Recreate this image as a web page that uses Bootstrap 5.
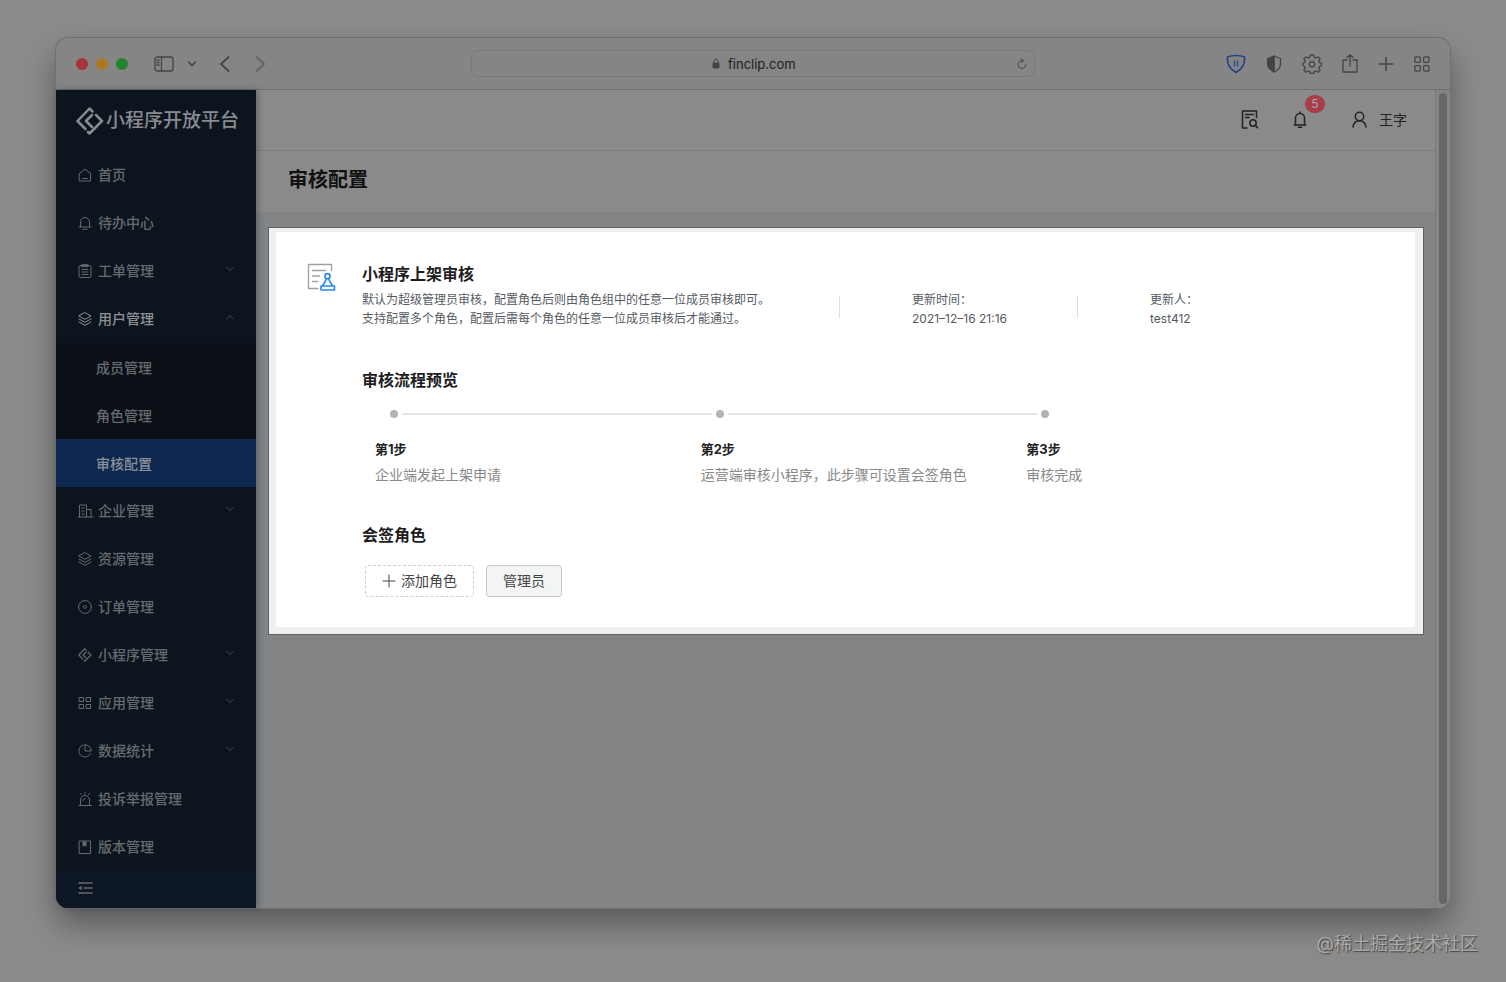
<!DOCTYPE html>
<html lang="zh-CN">
<head>
<meta charset="utf-8">
<meta name="viewport" content="width=device-width, initial-scale=1">
<title>审核配置 - 小程序开放平台</title>
<link href="https://cdn.jsdelivr.net/npm/bootstrap@5.3.0/dist/css/bootstrap.min.css" rel="stylesheet">
<style>
body{font-family:Inter,"Noto Sans CJK SC",sans-serif;font-size:14px;line-height:20px;background:#8b8b8b;color:#222}
svg{fill:none;stroke:currentColor;stroke-linecap:round;stroke-linejoin:round;flex:none;display:block}
button,a{color:inherit}
.plain{background:none;border:0;padding:0}
.desk{padding:38px 56px 0}
.browser{border-radius:12px;background:#828486;box-shadow:0 0 0 1px #707070,0 16px 32px rgba(0,0,0,.36)}
.toolbar{display:grid;grid-template-columns:1fr minmax(200px,564px) 1fr;height:52px;background:#858585;border-bottom:1px solid #6e6e6e;border-radius:12px 12px 0 0;color:#444}
.light{width:12px;height:12px;border-radius:50%}
.red{background:#a83437}
.amber{background:#a97a22}
.green{background:#23832f}
.panel-toggle{margin:0 14px 0 26px}
.address{display:grid;grid-template-columns:1fr auto 1fr;height:27px;border:1px solid #797979;border-radius:6px;padding:0 7px}
.address input{width:70px;font-size:13px;color:#1c1c1c;outline:0}
.side{width:200px;background:#0c151e;color:#666b70;border-radius:0 0 0 12px;box-shadow:2px 0 6px rgba(0,20,40,.3);z-index:1}
.brand{height:61px;padding:0 20px;gap:2px;font-size:19px;color:#888c91;font-weight:500}
.side .nav-item a{display:flex;align-items:center;height:48px;padding:0 22px;gap:6px;color:inherit;text-decoration:none;font-weight:500}
.side .open>a{color:#8e9296}
.side .sub{background:#0a1016}
.side .sub a{padding:1px 40px 0}
.side .sub .active a{background:#0e2850;color:#8a9099}
.side .chev{margin-left:auto;margin-bottom:5px;color:#454b51}
.fold{padding:0 22px 4px;background:#0d1724;border-radius:0 0 0 12px;min-height:37px}
.page{min-width:0}
.topbar{height:61px;background:#8a8a8a;border-bottom:1px solid #7c7c7c;padding-right:28px;color:#222}
.bell{margin:0 44px 0 34px}
.count{left:12px;top:-16px;width:20px;height:18px;border-radius:9px;background:#a83d49;color:#aaa;font-size:12px;line-height:18px}
.heading{height:61px;background:#8a8a8a;padding:0 32px 4px}
.heading h1{font-size:20px;line-height:28px;font-weight:700;color:#111}
.spot{margin:15px 11px 0 12px;padding:4px 8px 7px 7px;border:1px solid #5f6163;background:#edeff1}
.review{background:#fff;padding:30px 31px 30px}
.review-icon{margin:1px 25px 0 0}
.review h2{font-size:16px;line-height:24px;font-weight:700;color:#1d1d1d;margin:0}
.info{display:grid;grid-template-columns:minmax(0,477px) minmax(0,238px) 1fr;margin:4px 0 40px;font-size:12px;line-height:19px;color:#555a5f}
.info .cell{padding-left:73px;position:relative}
.info .cell::before{content:"";position:absolute;left:0;top:6px;height:22px;border-left:1px solid #dedede}
.flow{display:grid;grid-template-columns:repeat(3,1fr);padding:0 32px 0 13px;margin:16px 0 38px}
.track{height:12px;padding-left:15px;gap:4px;margin:0 -11px 19px 0}
.dot{width:8px;height:8px;border-radius:50%;background:#b3b3b3}
.rail{height:2px;background:#e4e4e4}
.flow h3{font-size:13px;line-height:20px;font-weight:700;color:#222;margin:0 0 6px}
.flow p{color:#888;line-height:20px;margin:0}
.roles{gap:12px;padding-left:3px;margin-top:18px}
.role{height:32px;border-radius:3px;font-size:14px;line-height:20px;padding:0 16px;color:#444;background:#f3f5f5;border:1px solid #c9cbcb}
.role.add{background:#fff;border:1px dashed #cfcfcf;gap:5px}
.scroll{width:15px;background:#858585;border-left:1px solid #7b7b7b;border-radius:0 0 12px 0;padding:3px 3px 4px}
.thumb{background:#666;border-radius:4px}
.credit{height:74px;padding:0 28px 2px;font-size:18px;color:#aaa;text-shadow:1px 1px 1px #444}
</style>
</head>
<body class="min-vh-100 d-flex flex-column">
<svg width="0" height="0" class="position-absolute">
<defs>
<symbol id="down" viewBox="0 0 8 6"><path d="M.5 1 4 4.500 7.500 1"/></symbol>
<symbol id="layers" viewBox="0 0 14 14"><path d="M7 .7 13 4 7 7.300 1 4zM1 7l6 3.300L13 7M1 10l6 3.300 6-3.300"/></symbol>
<symbol id="clip" viewBox="0 0 28 28"><path d="M16.500 4.500 13.500 1.500 1.500 14l8 8M20 8l6 6-12.500 12.500-1.500-1.500M16 8l-6 6 6 6"/></symbol>
<symbol id="four" viewBox="0 0 14 14"><path d="M1.500 1.500h4v4h-4zM8.500 1.500h4v4h-4zM1.500 8.500h4v4h-4zM8.500 8.500h4v4h-4z"/></symbol>
</defs>
</svg>
<div class="desk flex-grow-1 d-flex flex-column">
<div class="browser flex-grow-1 d-flex flex-column">
  <header class="toolbar align-items-center">
    <div class="d-flex align-items-center ps-3">
      <div class="d-flex gap-2 ms-1">
        <span class="light red"></span><span class="light amber"></span><span class="light green"></span>
      </div>
      <button class="plain panel-toggle" aria-label="边栏"><svg width="20" height="16" viewBox="0 0 20 16" stroke-width="1.300"><rect x="1" y="1" width="18" height="14" rx="2"/><path d="M7.500 1v14M3 4h2M3 6.500h2M3 9h2" /></svg></button>
      <button class="plain" aria-label="标签组"><svg width="8" height="6" stroke-width="1.500"><use href="#down"/></svg></button>
      <button class="plain ms-4" aria-label="后退"><svg width="10" height="16" viewBox="0 0 10 16" stroke-width="1.800"><path d="M8.500 1 1 8l7.500 7"/></svg></button>
      <button class="plain ms-4 opacity-50" aria-label="前进"><svg width="12" height="16" viewBox="0 0 12 16" stroke-width="1.800"><path d="M2.500 1l7.500 7-7.500 7"/></svg></button>
    </div>
    <div class="address align-items-center">
      <span></span>
      <label class="d-flex align-items-center gap-2 ps-1"><svg width="8" height="11" viewBox="0 0 8 11"><rect x="1" y="5" width="6" height="5" rx=".5" fill="currentColor"/><path d="M2 5V3a2 2 0 0 1 4 0v2"/></svg><input class="plain" type="text" value="finclip.com" aria-label="地址"></label>
      <button class="plain ms-auto" aria-label="刷新"><svg width="10" height="12" viewBox="0 0 10 12"><path d="M5.500 2.500A4 4 0 1 0 9 6.500M4.500.7l2 1.900-2 1.900"/></svg></button>
    </div>
    <div class="d-flex align-items-center justify-content-end gap-3 pe-3">
      <button class="plain me-1" aria-label="防护"><svg width="20" height="20" viewBox="0 0 20 20"><g stroke="#1f3f8d" stroke-width="1.600"><path d="M10 1.500c3 0 6 .5 8.600 1.500C19 10 16 15.500 10 18.500 4 15.500 1 10 1.400 3 4 2 7 1.500 10 1.500z"/><path d="M8.500 7v5M11.500 7v5" stroke="#34558d"/></g></svg></button>
      <button class="plain me-1" aria-label="隐私"><svg width="16" height="18" viewBox="0 0 16 18"><path d="M8 1 1.500 3.500V9c0 4 3 6.500 6.500 8z" fill="currentColor"/><path d="M8 1l6.500 2.500V9c0 4-3 6.500-6.500 8" stroke-width="1.300"/></svg></button>
      <button class="plain me-1" aria-label="设置"><svg width="20" height="20" viewBox="0 0 20 20" stroke-width="1.300"><path d="M8.400 1h3.200l.6 2.300 1.600.7 2.100-1.200 2.200 2.200-1.200 2.100.7 1.600 1.900.4v2.400l-1.900.8-.7 1.600 1.200 2.100-2.200 2.200-2.100-1.200-1.600.7-.6 1.800H8.400l-.6-1.800-1.600-.7-2.100 1.200L1.900 16l1.200-2.100-.7-1.600L1 11.500V9.100l1.400-.4.700-1.600L1.900 5l2.200-2.200L6.200 4l1.600-.7z"/><circle cx="10" cy="10.200" r="2.600"/></svg></button>
      <button class="plain me-1" aria-label="共享"><svg width="16" height="20" viewBox="0 0 16 20" stroke-width="1.300"><path d="M5 6H1v12h14V6h-4M8 12V.8M5 3.500l3-2.800 3 2.800"/></svg></button>
      <button class="plain me-1" aria-label="新标签页"><svg width="16" height="16" viewBox="0 0 16 16" stroke-width="1.500"><path d="M8 1.500v13M1.500 8h13"/></svg></button>
      <button class="plain me-1" aria-label="标签页概览"><svg width="16" height="16" viewBox="0 0 16 16" stroke-width="1.300"><rect x=".8" y=".8" width="5.500" height="5.500" rx="1"/><rect x="9.600" y=".8" width="5.500" height="5.500" rx="1"/><rect x=".8" y="9.600" width="5.500" height="5.500" rx="1"/><rect x="9.600" y="9.600" width="5.500" height="5.500" rx="1"/></svg></button>
    </div>
  </header>

  <div class="d-flex flex-grow-1">
    <nav class="side flex-shrink-0 d-flex flex-column">
      <div class="brand d-flex align-items-center text-nowrap"><svg width="28" height="28" stroke-width="2.500"><use href="#clip"/></svg>小程序开放平台</div>
      <ul class="nav flex-column flex-nowrap">
        <li class="nav-item"><a href="#"><svg width="14" height="14" viewBox="0 0 14 14"><path d="M1.500 5.500 7 1l5.500 4.500v7.500h-11zM4.500 10.500h5"/></svg>首页</a></li>
        <li class="nav-item"><a href="#"><svg width="14" height="14" viewBox="0 0 14 14"><path d="M2.500 11V6a4.500 4.500 0 0 1 9 0v5M1 11h12M5 13.300h4"/></svg>待办中心</a></li>
        <li class="nav-item"><a href="#"><svg width="14" height="14" viewBox="0 0 14 14"><rect x="1" y="1.500" width="12" height="12" rx="1.500"/><path d="M4 .7h6v2H4zM4 5.500h6M4 8h6M4 10.500h6"/></svg>工单管理<svg class="chev" width="8" height="6"><use href="#down"/></svg></a></li>
        <li class="nav-item open"><a href="#"><svg width="14" height="14"><use href="#layers"/></svg>用户管理<svg class="chev" width="8" height="6" viewBox="0 0 8 6"><path d="M.5 5 4 1.500 7.500 5"/></svg></a>
          <ul class="sub list-unstyled">
            <li><a href="#">成员管理</a></li>
            <li><a href="#">角色管理</a></li>
            <li class="active"><a href="#" aria-current="page">审核配置</a></li>
          </ul></li>
        <li class="nav-item"><a href="#"><svg width="14" height="14" viewBox="0 0 14 14" overflow="visible"><path d="M0 13h15M1.500 13V1h7v12M8.500 5.500H13V13M4 4h2M4 7h2M4 10h2"/></svg>企业管理<svg class="chev" width="8" height="6"><use href="#down"/></svg></a></li>
        <li class="nav-item"><a href="#"><svg width="14" height="14"><use href="#layers"/></svg>资源管理</a></li>
        <li class="nav-item"><a href="#"><svg width="14" height="14" viewBox="0 0 14 14"><circle cx="7" cy="7" r="6.400"/><path d="M7 5.300 8.700 7 7 8.700 5.300 7z"/></svg>订单管理</a></li>
        <li class="nav-item"><a href="#"><svg width="14" height="14" stroke-width="2.200"><use href="#clip"/></svg>小程序管理<svg class="chev" width="8" height="6"><use href="#down"/></svg></a></li>
        <li class="nav-item"><a href="#"><svg width="14" height="14"><use href="#four"/></svg>应用管理<svg class="chev" width="8" height="6"><use href="#down"/></svg></a></li>
        <li class="nav-item"><a href="#"><svg width="14" height="14" viewBox="0 0 14 14"><path d="M5 1A6.200 6.200 0 1 0 12.700 9.500M7 .8V7h6.300A6.300 6.300 0 0 0 7 .8z"/></svg>数据统计<svg class="chev" width="8" height="6"><use href="#down"/></svg></a></li>
        <li class="nav-item"><a href="#"><svg width="14" height="14" viewBox="0 0 14 14"><path d="M1 13.500h12.500M2.500 13.500V8a4.500 4.500 0 0 1 9 0v5.500M7 .5V2M2.500 1.500l1 1.200M11.500 1.500l-1 1.200M5 8.500a2 2 0 0 1 2-2"/></svg>投诉举报管理</a></li>
        <li class="nav-item"><a href="#"><svg width="14" height="14" viewBox="0 0 14 14"><path d="M1.500 1h11v12.500h-11z"/><path d="M4.500 1.500h4v5.500L6.500 5.500 4.500 7z" fill="currentColor" stroke="none"/></svg>版本管理</a></li>
      </ul>
      <div class="fold flex-grow-1 d-flex align-items-center"><button class="plain" aria-label="收起菜单"><svg width="15" height="12" viewBox="0 0 15 12" stroke-width="1.600"><path d="M1 1h13M6 6h8M1 11h13M3 5 1.500 6 3 7z"/></svg></button></div>
    </nav>

    <main class="page flex-grow-1">
      <div class="topbar d-flex align-items-center justify-content-end">
        <button class="plain" aria-label="搜索记录"><svg width="18" height="20" viewBox="0 0 18 20" stroke-width="1.500"><path d="M6 18H1.500V1h14v6.500M4.500 4.500h8M4.500 7.500H8"/><circle cx="12" cy="13" r="3.200"/><path d="m14.500 15.500 2 2.300"/></svg></button>
        <button class="plain position-relative bell" aria-label="通知"><svg width="14" height="18" viewBox="0 0 14 18" stroke-width="1.500"><path d="M2.500 14V7a4.500 4.500 0 0 1 9 0v7M1 14h12M7 2.500V1M5.500 16.300h3"/></svg><span class="count position-absolute text-center">5</span></button>
        <button class="plain d-flex align-items-center gap-2"><svg width="16" height="18" viewBox="0 0 16 18" stroke-width="1.500"><circle cx="8.500" cy="5.500" r="4.200"/><path d="M2 16c.5-4 3-6.300 6.500-6.300S14.500 12 15 16"/></svg><span class="ms-1">王字</span></button>
      </div>
      <div class="heading d-flex align-items-center"><h1 class="m-0">审核配置</h1></div>
      <section class="spot">
        <div class="review d-flex">
          <svg class="review-icon" width="30" height="29" viewBox="0 0 30 29"><g stroke="#a0a0a0" stroke-width="1.300"><path d="M11 25.500H1.500v-24h23v6M5.500 7.500h13M5.500 13h7M5.500 18.500h5"/></g><g stroke="#2c87ee" stroke-width="1.600"><circle cx="20.500" cy="13.200" r="2.600"/><path d="M19.500 15.800 15.500 23M21.500 15.800 25.500 23M14 23h13.500v4H14z"/></g></svg>
          <div class="flex-grow-1">
            <h2>小程序上架审核</h2>
            <div class="info">
              <div>默认为超级管理员审核，配置角色后则由角色组中的任意一位成员审核即可。<br>支持配置多个角色，配置后需每个角色的任意一位成员审核后才能通过。</div>
              <div class="cell">更新时间：<br>2021–12–16 21:16</div>
              <div class="cell">更新人：<br>test412</div>
            </div>
            <h2>审核流程预览</h2>
            <div class="flow">
              <div><div class="track d-flex align-items-center"><span class="dot"></span><span class="rail flex-grow-1"></span></div><h3>第1步</h3><p>企业端发起上架申请</p></div>
              <div><div class="track d-flex align-items-center"><span class="dot"></span><span class="rail flex-grow-1"></span></div><h3>第2步</h3><p>运营端审核小程序，此步骤可设置会签角色</p></div>
              <div><div class="track d-flex align-items-center"><span class="dot"></span></div><h3>第3步</h3><p>审核完成</p></div>
            </div>
            <h2>会签角色</h2>
            <div class="d-flex roles">
              <button class="role add d-flex align-items-center"><svg width="14" height="14" viewBox="0 0 14 14"><path d="M7 1v12M1 7h12"/></svg>添加角色</button>
              <button class="role">管理员</button>
            </div>
          </div>
        </div>
      </section>
    </main>
    <div class="scroll flex-shrink-0 d-flex"><div class="thumb flex-grow-1"></div></div>
  </div>
</div>
</div>
<footer class="credit d-flex align-items-center justify-content-end">@稀土掘金技术社区</footer>
<script src="https://cdn.jsdelivr.net/npm/bootstrap@5.3.0/dist/js/bootstrap.bundle.min.js"></script>
</body>
</html>
